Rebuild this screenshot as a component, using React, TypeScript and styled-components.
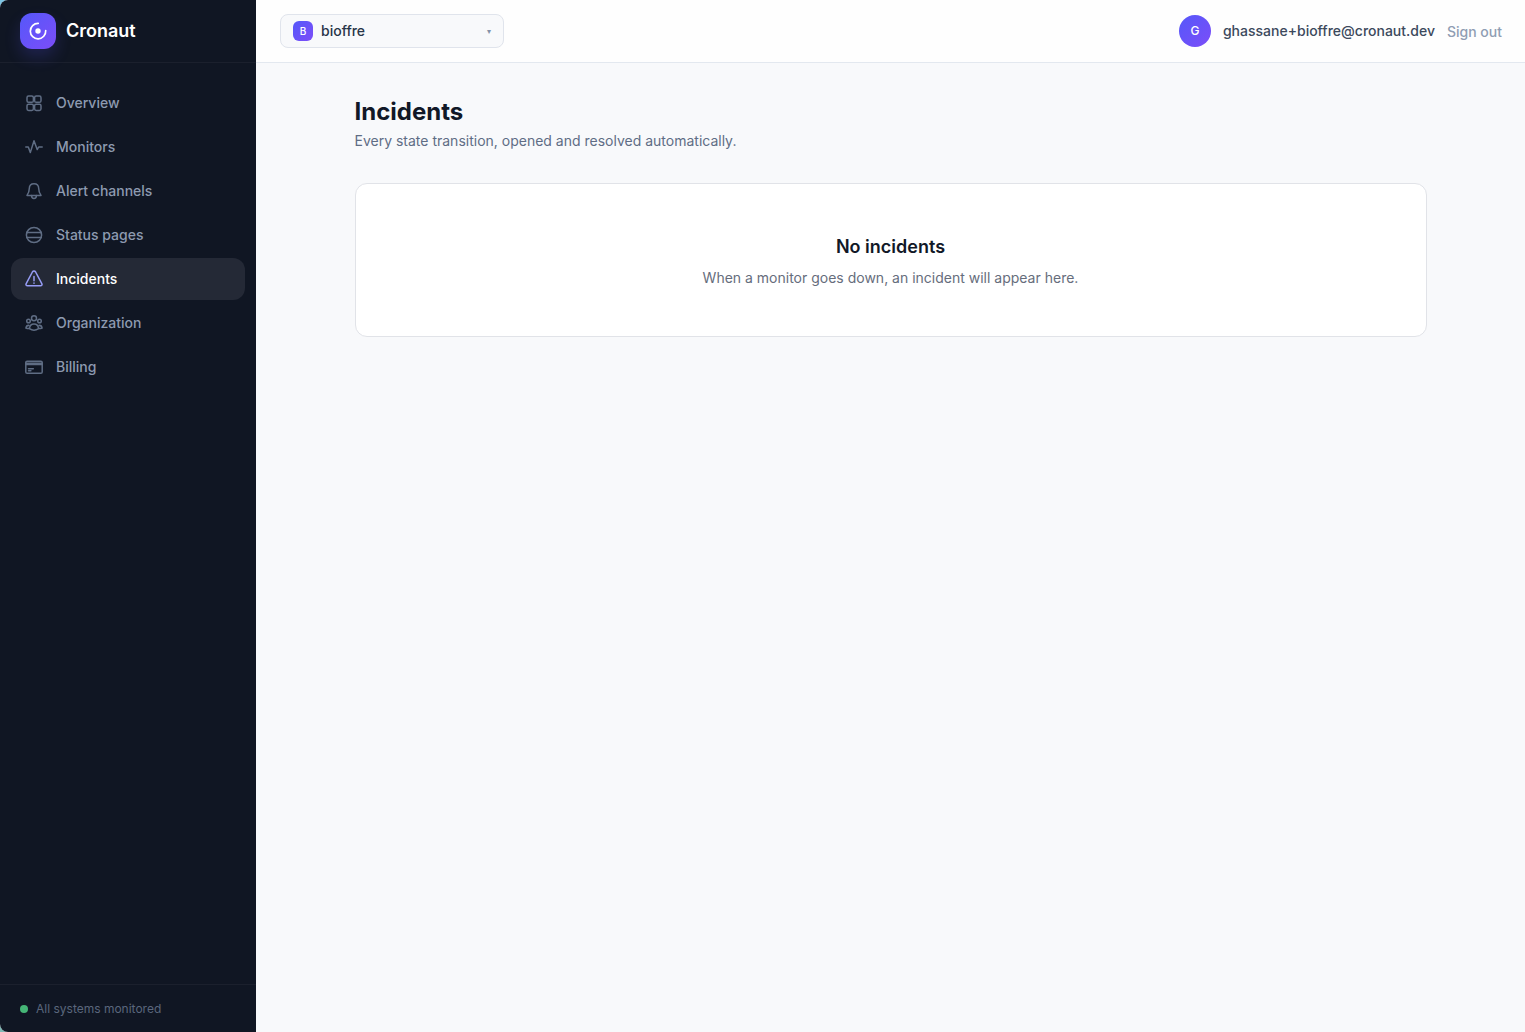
import React from "react";
import styled, { createGlobalStyle } from "styled-components";

const GlobalStyle = createGlobalStyle`
  *, *::before, *::after { box-sizing: border-box; }
  body {
    margin: 0;
    background: linear-gradient(#7cc4e4, #7fb9b5);
    font-family: Inter, "Liberation Sans", sans-serif;
    font-size: 14px;
    line-height: 20px;
    color: #111827;
    -webkit-font-smoothing: antialiased;
  }
  h1, h2, p, ul { margin: 0; padding: 0; }
  button, select { font: inherit; }
`;

const brandGradient = "linear-gradient(135deg, #5558fa, #7c4df8)";

const Shell = styled.div`
  display: flex;
  min-height: 100vh;
  border-radius: 8px 0 0 8px;
  overflow: hidden;
  background: #f8f9fb;
`;

const Sidebar = styled.aside`
  display: flex;
  flex-direction: column;
  flex: 0 0 256px;
  background: #101623;
`;

const Brand = styled.a`
  display: flex;
  align-items: center;
  gap: 10px;
  height: 63px;
  padding: 0 20px;
  border-bottom: 1px solid #1b202d;
  color: #fff;
  font-size: 18px;
  line-height: 28px;
  font-weight: 600;
  text-decoration: none;
`;

const BrandMark = styled.span`
  display: grid;
  place-items: center;
  width: 36px;
  height: 36px;
  border-radius: 12px;
  background: ${brandGradient};
  box-shadow: 0 8px 16px rgba(91, 84, 250, 0.2);
`;

const Nav = styled.nav`
  flex: 1;
  padding: 19px 11px;
`;

const NavList = styled.ul`
  display: grid;
  gap: 2px;
  list-style: none;
`;

const NavLink = styled.a<{ $active: boolean }>`
  display: flex;
  align-items: center;
  gap: 13px;
  height: 42px;
  padding: 0 14px;
  border-radius: 12px;
  background: ${(p) => (p.$active ? "#242936" : "transparent")};
  color: ${(p) => (p.$active ? "#fff" : "#8d9ab0")};
  font-weight: 500;
  text-decoration: none;

  svg { color: ${(p) => (p.$active ? "#969cf5" : "#5f6d84")}; }
`;

const SidebarFooter = styled.footer`
  display: flex;
  align-items: center;
  gap: 8px;
  height: 48px;
  padding: 0 20px;
  border-top: 1px solid #1b202d;
  color: #5a667c;
  font-size: 12px;
  line-height: 18px;
`;

const StatusDot = styled.span`
  width: 8px;
  height: 8px;
  border-radius: 50%;
  background: #45b576;
`;

const Page = styled.div`
  display: flex;
  flex-direction: column;
  flex: 1;
  min-width: 0;
`;

const Topbar = styled.header`
  display: flex;
  align-items: center;
  justify-content: space-between;
  height: 63px;
  padding: 0 23px 0 24px;
  border-bottom: 1px solid #e3e8ef;
  background: #fefefe;
`;

const OrgPicker = styled.label`
  display: flex;
  align-items: center;
  gap: 8px;
  width: 224px;
  height: 34px;
  padding: 0 12px;
  border: 1px solid #e0e4ec;
  border-radius: 8px;
  background: #f8f9fb;
`;

const OrgBadge = styled.span`
  display: grid;
  place-items: center;
  width: 20px;
  height: 20px;
  border-radius: 6px;
  background: ${brandGradient};
  color: #fff;
  font-size: 10px;
  font-weight: 500;
`;

const OrgSelect = styled.select`
  flex: 1;
  min-width: 0;
  padding: 0;
  border: 0;
  appearance: none;
  background: transparent;
  color: #283548;
  font-weight: 500;
`;

const Caret = styled.span`
  color: #8492a8;
  font-size: 8px;
`;

const Account = styled.div`
  display: flex;
  align-items: center;
  gap: 12px;
`;

const Avatar = styled.span`
  display: grid;
  place-items: center;
  width: 32px;
  height: 32px;
  border-radius: 50%;
  background: ${brandGradient};
  color: #fff;
  font-size: 12px;
  font-weight: 500;
`;

const Email = styled.span`
  color: #3c495c;
  font-weight: 500;
`;

const SignOut = styled.button`
  padding: 2px 0 0;
  border: 0;
  background: transparent;
  color: #8f9db3;
  font-weight: 500;
  cursor: pointer;
`;

const Content = styled.main`
  width: 100%;
  max-width: 1136px;
  margin: 0 auto;
  padding: 32px;
`;

const PageTitle = styled.h1`
  font-size: 24px;
  line-height: 34px;
  font-weight: 700;
`;

const PageIntro = styled.p`
  margin-top: 2px;
  color: #5f6d85;
`;

const EmptyCard = styled.section`
  display: grid;
  justify-items: center;
  gap: 6px;
  margin-top: 32px;
  padding: 48px 24px;
  border: 1px solid #e1e3e8;
  border-radius: 12px;
  background: #fff;
`;

const EmptyTitle = styled.h2`
  font-size: 18px;
  line-height: 30px;
  font-weight: 600;
`;

const EmptyText = styled.p`
  color: #666d7c;
`;

type NavIconName = "overview" | "monitors" | "alerts" | "status" | "incidents" | "organization" | "billing";

const iconShapes: Record<NavIconName, React.ReactNode> = {
  overview: (
    <>
      <rect x="2" y="2.1" width="6.4" height="6.2" rx="1.6" />
      <rect x="9.6" y="2.1" width="6.4" height="6.2" rx="1.6" />
      <rect x="2" y="10.2" width="6.4" height="6.2" rx="1.6" />
      <rect x="9.6" y="10.2" width="6.4" height="6.2" rx="1.6" />
    </>
  ),
  monitors: <path d="M.8 9h2.5l2 5.6L9 2.8l3.2 8.8L13.7 9h3.5" />,
  alerts: (
    <>
      <path d="M9 1.7c-3 0-4.7 2.1-4.7 4.9 0 3.4-.8 4.9-2.3 6.8h14c-1.5-1.9-2.3-3.4-2.3-6.8 0-2.8-1.7-4.9-4.7-4.9Z" />
      <path d="M6.6 13.6c0 1.8 1 3 2.4 3s2.4-1.2 2.4-3" />
    </>
  ),
  status: (
    <>
      <circle cx="9" cy="9" r="7.6" />
      <path d="M1.7 6.6h14.6M1.7 11.4h14.6" />
    </>
  ),
  incidents: (
    <>
      <path d="M7.4 2 1.2 13.7c-.6 1.2 0 2.1 1.3 2.1h13c1.300 0 1.900-.9 1.300-2.100L10.600 2C9.800.8 8.200.8 7.400 2Z" />
      <path d="M9 6.6v4.2M9 13v.2" />
    </>
  ),
  organization: (
    <>
      <circle cx="9" cy="4.3" r="2.5" />
      <circle cx="3.5" cy="7" r="1.8" />
      <circle cx="14.5" cy="7" r="1.8" />
      <path d="M4.4 14.6C4.7 11.8 6.5 10 9 10s4.3 1.8 4.6 4.6C12 15.7 10.5 16.2 9 16.2s-3-.5-4.6-1.6Z" />
      <path d="M4.1 11.4c-1.8-.2-2.9.9-3.2 2.7 1 .4 2 .6 3.2.5M13.9 11.4c1.8-.2 2.9.9 3.2 2.7-1 .4-2 .6-3.2.5" />
    </>
  ),
  billing: (
    <>
      <rect x=".8" y="3.2" width="16.4" height="12" rx="1.3" />
      <path d="M.8 5.2h16.4M.8 6.500h16.400M3.500 10.800h4.800M3.500 12.700h2.400" />
    </>
  ),
};

function NavIcon({ name }: { name: NavIconName }) {
  return (
    <svg width="18" height="18" viewBox="0 0 18 18" fill="none" stroke="currentColor" strokeWidth="1.5" strokeLinecap="round" strokeLinejoin="round" aria-hidden="true">
      {iconShapes[name]}
    </svg>
  );
}

const navItems: { label: string; icon: NavIconName }[] = [
  { label: "Overview", icon: "overview" },
  { label: "Monitors", icon: "monitors" },
  { label: "Alert channels", icon: "alerts" },
  { label: "Status pages", icon: "status" },
  { label: "Incidents", icon: "incidents" },
  { label: "Organization", icon: "organization" },
  { label: "Billing", icon: "billing" },
];

export default function App() {
  const current = "Incidents";

  return (
    <>
      <GlobalStyle />
      <Shell>
        <Sidebar>
          <Brand href="#">
            <BrandMark>
              <svg width="20" height="20" viewBox="0 0 20 20" fill="none" aria-hidden="true">
                <path d="M10.2 2.4A7.7 7.7 0 1 0 17.7 9.6" stroke="#fff" strokeWidth="1.7" strokeLinecap="round" />
                <circle cx="10" cy="10" r="2.7" fill="#fff" />
              </svg>
            </BrandMark>
            Cronaut
          </Brand>
          <Nav aria-label="Main">
            <NavList>
              {navItems.map(({ label, icon }) => (
                <li key={label}>
                  <NavLink href="#" $active={label === current} aria-current={label === current ? "page" : undefined}>
                    <NavIcon name={icon} />
                    {label}
                  </NavLink>
                </li>
              ))}
            </NavList>
          </Nav>
          <SidebarFooter>
            <StatusDot />
            All systems monitored
          </SidebarFooter>
        </Sidebar>
        <Page>
          <Topbar>
            <OrgPicker>
              <OrgBadge aria-hidden="true">B</OrgBadge>
              <OrgSelect aria-label="Organization" defaultValue="bioffre">
                <option value="bioffre">bioffre</option>
              </OrgSelect>
              <Caret aria-hidden="true">▾</Caret>
            </OrgPicker>
            <Account>
              <Avatar aria-hidden="true">G</Avatar>
              <Email>ghassane+bioffre@cronaut.dev</Email>
              <SignOut type="button">Sign out</SignOut>
            </Account>
          </Topbar>
          <Content>
            <PageTitle>Incidents</PageTitle>
            <PageIntro>Every state transition, opened and resolved automatically.</PageIntro>
            <EmptyCard>
              <EmptyTitle>No incidents</EmptyTitle>
              <EmptyText>When a monitor goes down, an incident will appear here.</EmptyText>
            </EmptyCard>
          </Content>
        </Page>
      </Shell>
    </>
  );
}
